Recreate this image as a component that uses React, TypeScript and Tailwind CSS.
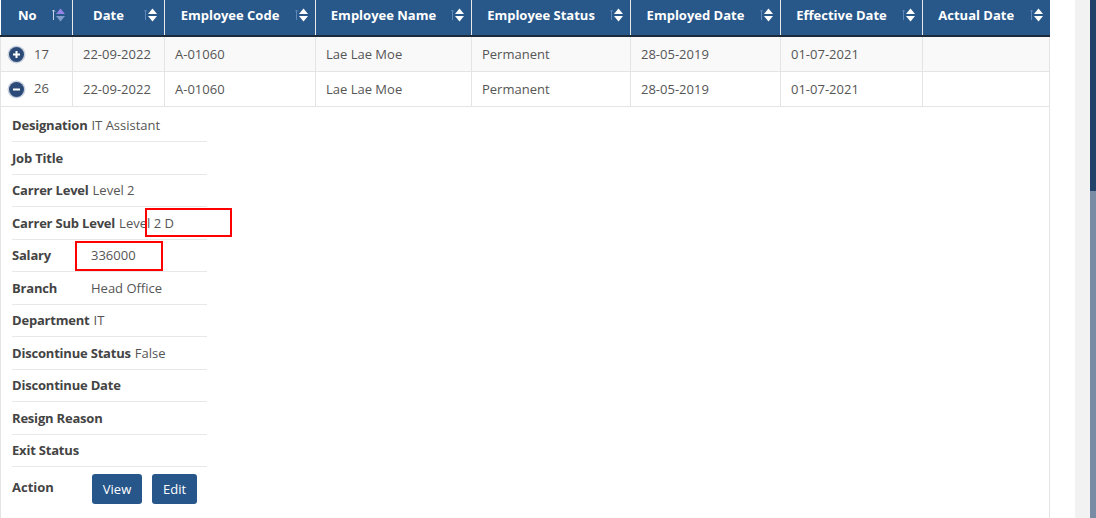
import * as React from "react"

type Column = { title: string; width: string }

const columns: Column[] = [
  { title: "No", width: "w-[72px]" },
  { title: "Date", width: "w-[92px]" },
  { title: "Employee Code", width: "w-[151px]" },
  { title: "Employee Name", width: "w-[156px]" },
  { title: "Employee Status", width: "w-[159px]" },
  { title: "Employed Date", width: "w-[150px]" },
  { title: "Effective Date", width: "w-[142px]" },
  { title: "Actual Date", width: "w-[127px]" },
]

const rows = [
  { no: "17", open: false, cells: ["22-09-2022", "A-01060", "Lae Lae Moe", "Permanent", "28-05-2019", "01-07-2021", ""] },
  { no: "26", open: true, cells: ["22-09-2022", "A-01060", "Lae Lae Moe", "Permanent", "28-05-2019", "01-07-2021", ""] },
]

const details: [string, string][] = [
  ["Designation", "IT Assistant"],
  ["Job Title", ""],
  ["Carrer Level", "Level 2"],
  ["Carrer Sub Level", "Level 2 D"],
  ["Salary", "336000"],
  ["Branch", "Head Office"],
  ["Department", "IT"],
  ["Discontinue Status", "False"],
  ["Discontinue Date", ""],
  ["Resign Reason", ""],
  ["Exit Status", ""],
]

function SortIcon({ active }: { active?: boolean }) {
  return (
    <svg className="absolute right-[7px] top-[7px]" width="13" height="16" viewBox="0 0 13 16">
      <path d="M1.5 3 L1.5 13 M0 4.5 L1.5 3 L3 4.5" stroke={active ? "#c9d3ea" : "#5f88b8"} strokeWidth="1" fill="none" />
      <path d="M4 7 L8.5 1.5 L13 7 Z" fill={active ? "#9484e6" : "#ffffff"} />
      <path d="M4 9 L8.5 14.5 L13 9 Z" fill={active ? "#7e9ccc" : "#ffffff"} />
    </svg>
  )
}

function ToggleIcon({ open }: { open: boolean }) {
  return (
    <span className="inline-flex size-[15px] items-center justify-center rounded-full bg-[#2b4a78] shadow-[0_0_0_1.5px_#c9d2de] align-middle">
      <svg width="9" height="9" viewBox="0 0 9 9">
        <path d={open ? "M1 4.5 H8" : "M1 4.5 H8 M4.5 1 V8"} stroke="#fff" strokeWidth="2" />
      </svg>
    </span>
  )
}

export default function App() {
  return (
    <div className="flex h-[518px] w-[1096px] overflow-hidden bg-white font-['Open_Sans',sans-serif] text-[13px] text-[#555]">
      <div className="w-[1075px] shrink-0">
        <table className="w-[1050px] table-fixed border-collapse">
          <thead>
            <tr className="h-[36px] border-b-2 border-[#1c2a3a] bg-[#28578a] text-white">
              {columns.map((col, i) => (
                <th
                  className={`relative ${col.width} border-r border-[#e8e8e8] pb-[5px] pl-2 pr-[28px] text-center text-[13px] font-bold leading-[18px] last:border-r-0`}
                  key={col.title}
                >
                  <span className={i === 0 ? "relative left-[1px]" : ""}>{col.title}</span>
                  <SortIcon active={i === 0} />
                </th>
              ))}
            </tr>
          </thead>
          <tbody>
            {rows.map((row, r) => (
              <tr className={`border-b border-[#e4e4e4] ${r === 0 ? "bg-[#f9f9f9]" : "bg-white"}`} key={row.no}>
                <td className="h-[35px] border-x border-[#e4e4e4] pl-[8px] pr-1">
                  <span className="flex items-center gap-[10px] pt-[1px]">
                    <ToggleIcon open={row.open} />
                    {row.no}
                  </span>
                </td>
                {row.cells.map((c, i) => (
                  <td className="h-[35px] border-r border-[#e4e4e4] px-[10px] pt-[2px]" key={i}>
                    {c}
                  </td>
                ))}
              </tr>
            ))}
            <tr>
              <td className="h-[412px] border-x border-[#e4e4e4] align-top" colSpan={8}>
                <div className="relative w-[206px] pl-[11px] pt-[3px]">
                  <ul>
                    {details.map(([label, value]) => (
                      <li className="flex h-[32.5px] items-center border-b border-[#e8e8e8] leading-[18px]" key={label}>
                        <span className="inline-block min-w-[79px] pr-[4px] font-bold tracking-[-0.2px] text-[#444]">{label}</span>
                        <span>{value}</span>
                      </li>
                    ))}
                    <li className="flex pt-[7px] leading-[18px]">
                      <span className="inline-block min-w-[80px] pt-[4px] font-bold text-[#444]">Action</span>
                      <button className="h-[30px] w-[50px] rounded-[3px] bg-[#27568a] text-[13px] text-white" type="button">
                        View
                      </button>
                      <button className="ml-[10px] h-[30px] w-[45px] rounded-[3px] bg-[#27568a] text-[13px] text-white" type="button">
                        Edit
                      </button>
                    </li>
                  </ul>
                  <div className="absolute left-[144px] top-[101px] h-[29px] w-[87px] border-2 border-[#ff0000]" />
                  <div className="absolute left-[74px] top-[134px] h-[30px] w-[88px] border-2 border-[#ff0000]" />
                </div>
              </td>
            </tr>
          </tbody>
        </table>
      </div>
      <div className="w-[15px] shrink-0 bg-[#f2f2f2]" />
      <div className="flex w-[6px] shrink-0 flex-col">
        <div className="h-[191px] bg-[#23426a]" />
        <div className="flex-1 bg-[#7a8ba5]" />
      </div>
    </div>
  )
}
